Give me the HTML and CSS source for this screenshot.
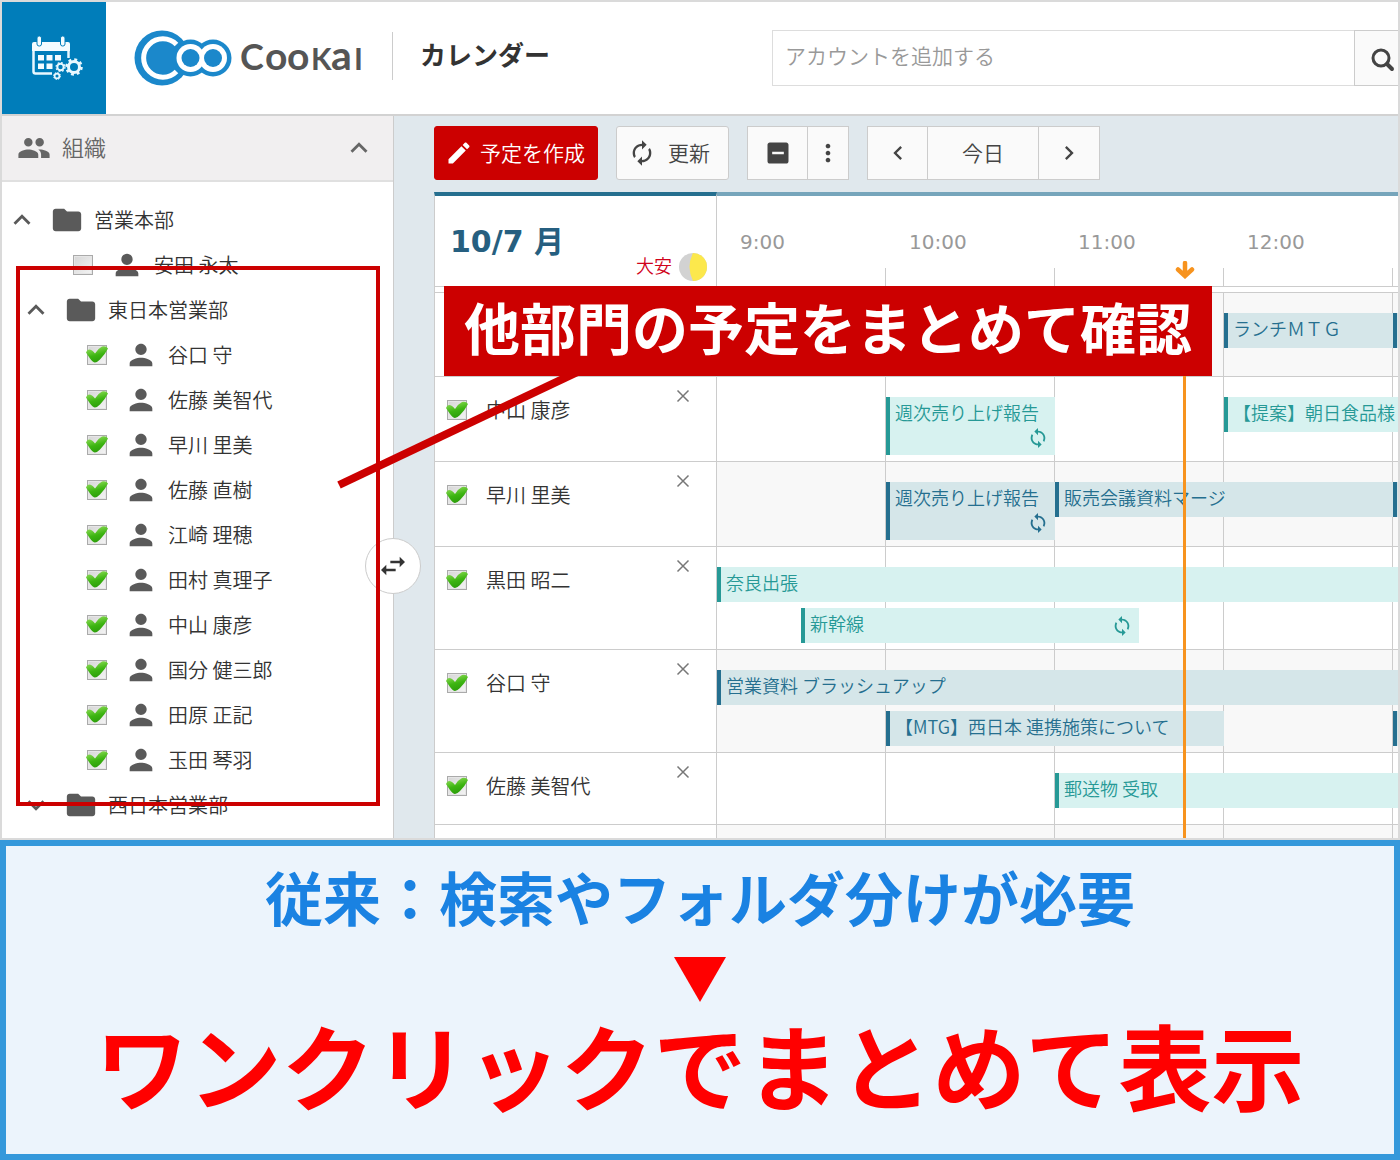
FILE: index.html
```html
<!DOCTYPE html>
<html lang="ja">
<head>
<meta charset="utf-8">
<meta name="viewport" content="width=device-width, initial-scale=1">
<title>CooKai カレンダー</title>
<link rel="stylesheet" href="styles.css">
</head>
<body>
<svg class="defs" aria-hidden="true">
  <symbol id="i-up" viewBox="0 0 24 24"><path d="M12 8l-6 6 1.41 1.41L12 10.83l4.59 4.58L18 14z"/></symbol>
  <symbol id="i-down" viewBox="0 0 24 24"><path d="M16.59 8.59L12 13.17 7.41 8.59 6 10l6 6 6-6z"/></symbol>
  <symbol id="i-left" viewBox="0 0 24 24"><path d="M15.41 7.41L14 6l-6 6 6 6 1.41-1.41L10.83 12z"/></symbol>
  <symbol id="i-right" viewBox="0 0 24 24"><path d="M10 6L8.59 7.41 13.17 12l-4.58 4.59L10 18l6-6z"/></symbol>
  <symbol id="i-folder" viewBox="0 0 24 24"><path d="M10 4H4c-1.1 0-1.99.9-1.99 2L2 18c0 1.1.9 2 2 2h16c1.1 0 2-.9 2-2V8c0-1.1-.9-2-2-2h-8l-2-2z"/></symbol>
  <symbol id="i-person" viewBox="0 0 24 24"><path d="M12 12c2.21 0 4-1.79 4-4s-1.79-4-4-4-4 1.790-4 4 1.790 4 4 4zm0 2c-2.670 0-8 1.340-8 4v2h16v-2c0-2.660-5.330-4-8-4z"/></symbol>
  <symbol id="i-people" viewBox="0 0 24 24"><path d="M16 11c1.660 0 2.990-1.340 2.990-3S17.660 5 16 5s-3 1.340-3 3 1.340 3 3 3zm-8 0c1.660 0 2.990-1.340 2.990-3S9.660 5 8 5 5 6.340 5 8s1.340 3 3 3zm0 2c-2.330 0-7 1.170-7 3.500V19h14v-2.500c0-2.330-4.670-3.500-7-3.500zm8 0c-.290 0-.620.020-.970.050 1.160.840 1.970 1.970 1.970 3.450V19h6v-2.500c0-2.330-4.670-3.500-7-3.500z"/></symbol>
  <symbol id="i-edit" viewBox="0 0 24 24"><path d="M3 17.250V21h3.750L17.810 9.940l-3.750-3.750L3 17.250zM20.710 7.040c.390-.390.390-1.020 0-1.410l-2.340-2.340c-.390-.390-1.020-.390-1.410 0l-1.830 1.830 3.750 3.750 1.830-1.830z"/></symbol>
  <symbol id="i-renew" viewBox="0 0 24 24"><path d="M12 6v3l4-4-4-4v3c-4.420 0-8 3.580-8 8 0 1.570.460 3.030 1.240 4.260L6.700 14.800c-.450-.830-.700-1.790-.700-2.800 0-3.310 2.690-6 6-6zm6.760 1.740L17.300 9.200c.440.840.700 1.790.700 2.800 0 3.310-2.690 6-6 6v-3l-4 4 4 4v-3c4.420 0 8-3.580 8-8 0-1.570-.460-3.030-1.240-4.260z"/></symbol>
  <symbol id="i-sync" viewBox="0 0 24 24"><path d="M12 4V1L8 5l4 4V6c3.310 0 6 2.690 6 6 0 1.010-.250 1.970-.700 2.800l1.460 1.460C19.540 15.030 20 13.570 20 12c0-4.420-3.580-8-8-8zm0 14c-3.310 0-6-2.690-6-6 0-1.010.250-1.970.700-2.800L5.240 7.740C4.460 8.970 4 10.430 4 12c0 4.420 3.580 8 8 8v3l4-4-4-4v3z"/></symbol>
  <symbol id="i-minus" viewBox="0 0 24 24"><path d="M19 3H5c-1.100 0-2 .9-2 2v14c0 1.100.9 2 2 2h14c1.100 0 2-.9 2-2V5c0-1.100-.9-2-2-2zm-2 10H7v-2h10v2z"/></symbol>
  <symbol id="i-more" viewBox="0 0 24 24"><path d="M12 8c1.100 0 2-.9 2-2s-.9-2-2-2-2 .9-2 2 .9 2 2 2zm0 2c-1.100 0-2 .9-2 2s.9 2 2 2 2-.9 2-2-.9-2-2-2zm0 6c-1.100 0-2 .9-2 2s.9 2 2 2 2-.9 2-2-.9-2-2-2z"/></symbol>
  <symbol id="i-swap" viewBox="0 0 24 24"><path d="M6.990 11L3 15l3.990 4v-3H14v-2H6.990v-3zM21 9l-3.990-4v3H10v2h7.010v3L21 9z"/></symbol>
  <symbol id="i-close" viewBox="0 0 18 18"><path d="M3.500 3.500l11 11M14.500 3.500l-11 11" fill="none" stroke="currentColor" stroke-width="1.500"/></symbol>
  <symbol id="i-search" viewBox="0 0 30 30"><circle cx="12" cy="13" r="8" fill="none" stroke="currentColor" stroke-width="3"/><path d="M18 19l5 5" stroke="currentColor" stroke-width="4" stroke-linecap="round"/></symbol>
</svg>

<section class="app">
  <header class="topbar">
    <a class="app-icon" href="#" aria-label="カレンダー">
      <svg width="54" height="46" viewBox="0 0 54 46">
        <g fill="none" stroke="#e9f8ff" stroke-width="2.500">
          <path d="M3.500 12v24.500q0 2 2 2H22M38.500 13v10"/>
        </g>
        <g fill="#f4fcff">
          <path d="M4 7h34q2 0 2 2v7H2V9q0-2 2-2z"/>
          <rect x="8" y="20" width="6" height="5.500"/><rect x="16.500" y="20" width="6" height="5.500"/><rect x="25" y="20" width="6" height="5.500"/>
          <rect x="8" y="28.500" width="6" height="5.500"/><rect x="16.500" y="28.500" width="6" height="5.500"/>
        </g>
        <g fill="#f4fcff" stroke="#007dba" stroke-width="1"><rect x="7" y="1" width="4.500" height="10" rx="2"/><rect x="30.500" y="1" width="4.500" height="10" rx="2"/></g>
        <g fill="none" stroke="#e9f8ff">
          <circle cx="44" cy="32" r="5.500" stroke-width="3"/>
          <circle cx="44" cy="32" r="7.500" stroke-width="2.500" stroke-dasharray="2.900 2.990"/>
          <circle cx="30.500" cy="32" r="3.200" stroke-width="2"/>
          <circle cx="30.500" cy="32" r="4.500" stroke-width="1.200" stroke-dasharray="1.800 1.734"/>
          <circle cx="27" cy="41" r="2.400" stroke-width="1.700"/>
          <circle cx="27" cy="41" r="3.500" stroke-width="1" stroke-dasharray="1.400 1.349"/>
        </g>
      </svg>
    </a>
    <a class="logo" href="#" aria-label="CooKai">
      <svg width="232" height="58" viewBox="133 29 232 58">
        <g fill="#1b88cb"><circle cx="162" cy="58" r="27.500"/><circle cx="190.500" cy="58" r="18.500"/><circle cx="213" cy="58" r="18.500"/></g>
        <g fill="none" stroke="#fff" stroke-width="5">
          <path d="M176.500 44.500A19.200 19.200 0 1 0 176.500 71.500"/>
        </g>
        <circle cx="190.500" cy="58" r="14" fill="#fff"/><circle cx="213" cy="58" r="14" fill="#fff"/>
        <circle cx="190.500" cy="58" r="9" fill="#1b88cb"/><circle cx="213" cy="58" r="9" fill="#1b88cb"/>
        <text class="wordmark" y="70"><tspan x="240" font-size="36">C</tspan><tspan x="265" font-size="39">o</tspan><tspan x="287" font-size="39">o</tspan><tspan x="311" font-size="30">K</tspan><tspan x="331" font-size="41">a</tspan><tspan x="354" font-size="30">I</tspan></text>
      </svg>
    </a>
    <h1 class="page-title">カレンダー</h1>
    <form class="search">
      <input type="text" placeholder="アカウントを追加する" aria-label="アカウントを追加する">
      <button type="button" aria-label="検索"><svg width="30" height="30"><use href="#i-search"/></svg></button>
    </form>
  </header>

  <div class="workspace">
    <aside class="sidebar">
      <div class="side-head">
        <svg width="34" height="34"><use href="#i-people"/></svg>
        <h2>組織</h2>
        <button type="button" aria-label="閉じる"><svg width="34" height="34"><use href="#i-up"/></svg></button>
      </div>
      <ul class="tree">
        <li class="folder"><button type="button" aria-label="閉じる"><svg><use href="#i-up"/></svg></button><svg><use href="#i-folder"/></svg><span>営業本部</span></li>
        <li class="person"><label><input type="checkbox"><svg><use href="#i-person"/></svg><span>安田 永太</span></label></li>
        <li>
          <ul class="branch">
            <li class="folder"><button type="button" aria-label="閉じる"><svg><use href="#i-up"/></svg></button><svg><use href="#i-folder"/></svg><span>東日本営業部</span></li>
            <li class="person"><label><input type="checkbox" checked><svg><use href="#i-person"/></svg><span>谷口 守</span></label></li>
            <li class="person"><label><input type="checkbox" checked><svg><use href="#i-person"/></svg><span>佐藤 美智代</span></label></li>
            <li class="person"><label><input type="checkbox" checked><svg><use href="#i-person"/></svg><span>早川 里美</span></label></li>
            <li class="person"><label><input type="checkbox" checked><svg><use href="#i-person"/></svg><span>佐藤 直樹</span></label></li>
            <li class="person"><label><input type="checkbox" checked><svg><use href="#i-person"/></svg><span>江崎 理穂</span></label></li>
            <li class="person"><label><input type="checkbox" checked><svg><use href="#i-person"/></svg><span>田村 真理子</span></label></li>
            <li class="person"><label><input type="checkbox" checked><svg><use href="#i-person"/></svg><span>中山 康彦</span></label></li>
            <li class="person"><label><input type="checkbox" checked><svg><use href="#i-person"/></svg><span>国分 健三郎</span></label></li>
            <li class="person"><label><input type="checkbox" checked><svg><use href="#i-person"/></svg><span>田原 正記</span></label></li>
            <li class="person"><label><input type="checkbox" checked><svg><use href="#i-person"/></svg><span>玉田 琴羽</span></label></li>
            <li class="folder"><button type="button" aria-label="開く"><svg><use href="#i-down"/></svg></button><svg><use href="#i-folder"/></svg><span>西日本営業部</span></li>
          </ul>
        </li>
      </ul>
      <button type="button" class="side-toggle" aria-label="サイドバーの幅"><svg width="32" height="32"><use href="#i-swap"/></svg></button>
    </aside>

    <main class="calendar">
      <div class="toolbar">
        <button type="button" class="btn primary"><svg width="28" height="28"><use href="#i-edit"/></svg><span>予定を作成</span></button>
        <button type="button" class="btn refresh"><svg width="28" height="28"><use href="#i-renew"/></svg><span>更新</span></button>
        <div class="btn-group">
          <button type="button" class="btn step" aria-label="折りたたむ"><svg width="28" height="28"><use href="#i-minus"/></svg></button>
          <button type="button" class="btn more" aria-label="その他"><svg width="28" height="28"><use href="#i-more"/></svg></button>
        </div>
        <div class="btn-group">
          <button type="button" class="btn step" aria-label="前の日"><svg width="28" height="28"><use href="#i-left"/></svg></button>
          <button type="button" class="btn today"><span>今日</span></button>
          <button type="button" class="btn step" aria-label="次の日"><svg width="28" height="28"><use href="#i-right"/></svg></button>
        </div>
      </div>

      <div class="schedule">
        <table>
          <colgroup><col class="c-name"><col span="5" class="c-hour"></colgroup>
          <thead>
            <tr>
              <th class="date-cell"><div class="date-head"><span class="date">10/7 月</span><span class="rokuyo">大安</span>
                <svg width="28" height="28" viewBox="0 0 28 28" aria-hidden="true"><circle cx="14" cy="14" r="14" fill="#d2d2d2"/><path d="M14 0a14 14 0 0 1 0 28Q7 14 14 0z" fill="#fce84c"/></svg></div></th>
              <th class="hour">9:00</th><th class="hour">10:00</th><th class="hour">11:00</th><th class="hour">12:00</th><th class="hour"></th>
            </tr>
            <tr class="head-gap"><td colspan="6"></td></tr>
          </thead>
          <tbody>
            <tr class="tall">
              <th><div class="member"></div></th>
              <td colspan="5"><div class="lane"><div class="ev blue h12 w1">ランチＭＴＧ</div><div class="ev blue h13 w1"></div></div></td>
            </tr>
            <tr>
              <th><div class="member"><label><input type="checkbox" checked><span>中山 康彦</span></label><button type="button" aria-label="外す"><svg width="18" height="18"><use href="#i-close"/></svg></button></div></th>
              <td colspan="5"><div class="lane"><div class="ev teal double h10 w1">週次売り上げ報告<svg width="22" height="22"><use href="#i-sync"/></svg></div><div class="ev teal h12 w2">【提案】朝日食品様</div></div></td>
            </tr>
            <tr>
              <th><div class="member"><label><input type="checkbox" checked><span>早川 里美</span></label><button type="button" aria-label="外す"><svg width="18" height="18"><use href="#i-close"/></svg></button></div></th>
              <td colspan="5"><div class="lane"><div class="ev blue double h10 w1">週次売り上げ報告<svg width="22" height="22"><use href="#i-sync"/></svg></div><div class="ev blue h11 w2">販売会議資料マージ</div><div class="ev blue h13 w1"></div></div></td>
            </tr>
            <tr>
              <th><div class="member"><label><input type="checkbox" checked><span>黒田 昭二</span></label><button type="button" aria-label="外す"><svg width="18" height="18"><use href="#i-close"/></svg></button></div></th>
              <td colspan="5"><div class="lane"><div class="ev teal h9 w5">奈良出張</div><div class="ev teal second h9half w2">新幹線<svg width="22" height="22"><use href="#i-sync"/></svg></div></div></td>
            </tr>
            <tr>
              <th><div class="member"><label><input type="checkbox" checked><span>谷口 守</span></label><button type="button" aria-label="外す"><svg width="18" height="18"><use href="#i-close"/></svg></button></div></th>
              <td colspan="5"><div class="lane"><div class="ev blue h9 w5">営業資料 ブラッシュアップ</div><div class="ev blue second h10 w2">【MTG】西日本 連携施策について</div><div class="ev blue second h13 w1"></div></div></td>
            </tr>
            <tr>
              <th><div class="member"><label><input type="checkbox" checked><span>佐藤 美智代</span></label><button type="button" aria-label="外す"><svg width="18" height="18"><use href="#i-close"/></svg></button></div></th>
              <td colspan="5"><div class="lane"><div class="ev teal h11 w3">郵送物 受取</div></div></td>
            </tr>
            <tr>
              <th><div class="member last"><button type="button" aria-label="外す"><svg width="18" height="18"><use href="#i-close"/></svg></button></div></th>
              <td colspan="5"><div class="lane"></div></td>
            </tr>
          </tbody>
        </table>
        <svg class="now-mark" width="20" height="18" viewBox="0 0 20 18" aria-hidden="true"><path d="M10 2v12M3 8.500l7 6.500 7-6.500" fill="none" stroke="#f7931e" stroke-width="4.500" stroke-linecap="round"/></svg>
        <div class="now-line"></div>
      </div>
    </main>
  </div>

  <div class="frame"></div>
  <svg class="pointer" width="260" height="130" viewBox="0 0 260 130" aria-hidden="true"><path d="M9 125L260 6" stroke="#c00" stroke-width="8"/></svg>
  <p class="callout">他部門の予定をまとめて確認</p>
</section>

<section class="promo">
  <p class="before">従来：検索やフォルダ分けが必要</p>
  <div class="arrow"></div>
  <p class="after">ワンクリックでまとめて表示</p>
</section>
</body>
</html>
```
FILE: styles.css
```css
* { box-sizing: border-box; }

body {
  margin: 0;
  height: 100vh;
  display: flex;
  flex-direction: column;
  font-family: "Noto Sans CJK JP", sans-serif;
  font-weight: 350;
  font-size: 20px;
  color: #333;
}

h1, h2, p, ul { margin: 0; padding: 0; }
ul { list-style: none; }
svg { display: block; flex: none; fill: currentColor; }
.defs { position: absolute; width: 0; height: 0; }

button {
  font: inherit;
  color: inherit;
  background: none;
  border: 0;
  padding: 0;
  cursor: pointer;
}

input[type="checkbox"] {
  appearance: none;
  flex: none;
  position: relative;
  width: 20px;
  height: 20px;
  margin: 0;
  border: 1px solid #aaa;
  background: linear-gradient(135deg, #d6d6d6, #f4f4f4);
  box-shadow: inset 0 0 0 1px #e6e6e6;
}

input[type="checkbox"]:checked::before {
  content: "";
  position: absolute;
  left: -2px;
  top: -1px;
  width: 22px;
  height: 20px;
  background: linear-gradient(165deg, #8edb58 15%, #3db511 50%, #1f8d05);
  clip-path: path("M0 8Q1 5 3 5Q6 5 9 9Q12 4 16 2Q20 1 22 4Q19 10 14 15Q11 18 9 18Q7 18 4 14Z");
}

/* application window */
.app {
  flex: 1;
  min-height: 0;
  position: relative;
  display: flex;
  flex-direction: column;
  overflow: hidden;
  border: 2px solid #dadada;
  background: #fff;
}

.topbar {
  flex: none;
  display: flex;
  align-items: center;
  border-bottom: 2px solid #d2d2d2;
}

.app-icon {
  display: flex;
  align-items: center;
  justify-content: center;
  width: 104px;
  height: 112px;
  padding-left: 6px;
  background: #007dba;
}

.logo { margin-left: 27px; }
.wordmark { font-family: Lato, sans-serif; font-weight: 700; fill: #555; }

.page-title {
  display: flex;
  align-items: center;
  height: 48px;
  margin: 0 0 4px 27px;
  padding: 0 0 6px 27px;
  border-left: 1px solid #ccc;
  font-size: 26px;
  font-weight: 700;
  white-space: nowrap;
}

.search {
  flex: 0 1 626px;
  display: flex;
  height: 56px;
  margin-left: auto;
}

.search input {
  flex: 1;
  min-width: 0;
  padding: 0 12px 6px;
  border: 1px solid #ddd;
  border-right: 0;
  font: inherit;
  font-size: 21px;
}

.search input::placeholder { color: #999; opacity: 1; }

.search button {
  width: 44px;
  padding: 4px 0 0 14px;
  border: 1px solid #ccc;
  border-right: 0;
  background: #fafafa;
  color: #444;
}

.workspace { flex: 1; min-height: 0; display: flex; }

/* organisation tree */
.sidebar {
  flex: 0 0 392px;
  position: relative;
  border-right: 1px solid #ccc;
}

.side-head {
  display: flex;
  align-items: center;
  height: 66px;
  padding: 0 17px 0 15px;
  border-bottom: 2px solid #e0e0e0;
  background: #f1eff0;
  color: #666;
}

.side-head h2 { flex: 1; margin-left: 11px; padding-bottom: 4px; font-size: 22px; font-weight: 350; }

.tree { padding-top: 15px; }
.branch { padding-left: 14px; }
.tree svg { width: 34px; height: 34px; color: #5a5a5a; }
.folder, .person label { display: flex; align-items: center; height: 45px; }
.folder { padding-left: 3px; }
.folder button { margin-right: 11px; }
.folder span { margin-left: 10px; }
.person label { padding-left: 71px; }
.person label svg { margin: 0 10px 0 17px; }

.side-toggle {
  position: absolute;
  top: 422px;
  right: -28px;
  z-index: 1;
  display: grid;
  place-items: center;
  width: 56px;
  height: 56px;
  border: 1px solid #ccc;
  border-radius: 50%;
  background: #fff;
}

/* calendar */
.calendar {
  flex: 1;
  min-width: 0;
  display: flex;
  flex-direction: column;
  padding: 10px 0 0 40px;
  overflow: hidden;
  background: #e0e8ed;
}

.toolbar { display: flex; gap: 18px; padding-bottom: 12px; }
.btn-group { display: flex; }

.btn {
  display: flex;
  align-items: center;
  justify-content: center;
  height: 54px;
  border: 1px solid #ccc;
  border-radius: 3px;
  background: #fafafa;
  color: #444;
  font-size: 21px;
  white-space: nowrap;
}

.btn span { padding-bottom: 2px; }
.btn-group .btn { border-radius: 0; }
.btn-group .btn + .btn { border-left: 0; }
.primary { gap: 7px; padding: 0 12px 0 10px; border-color: #c00; background: #c00; color: #fff; }
.refresh { gap: 12px; width: 113px; padding-right: 7px; }
.step { width: 61px; }
.more { width: 41px; }
.today { width: 111px; }

.schedule { flex: 1; min-height: 0; position: relative; }

table {
  width: 1128px;
  table-layout: fixed;
  border-collapse: separate;
  border-spacing: 0;
  background: #fff;
}

.c-name { width: 283px; }
.c-hour { width: 169px; }
th, td { padding: 0; font-weight: 350; text-align: left; vertical-align: top; }

thead th { height: 95px; border-bottom: 1px solid #ccc; }

.date-cell { border: 1px solid #ccc; border-top: 4px solid #256f8f; }
.date-head { display: flex; align-items: flex-end; height: 90px; padding: 0 9px 5px 15px; }

.date {
  flex: 1;
  align-self: flex-start;
  padding-top: 27px;
  font: 700 30px/38px "DejaVu Sans", "Noto Sans CJK JP", sans-serif;
  color: #265f80;
}

.rokuyo { margin-right: 7px; padding-bottom: 2px; font-size: 18px; line-height: 28px; color: #d0021b; }

.hour {
  padding: 27px 0 0 23px;
  border-top: 4px solid #76a5bb;
  background: linear-gradient(#ccc, #ccc) right bottom / 1px 18px no-repeat;
  font: 20px/38px "DejaVu Sans", sans-serif;
  color: #999;
}

.head-gap td { height: 6px; border: 1px solid #ccc; border-width: 0 0 1px 1px; }

tbody th { border: 1px solid #ccc; border-top: 0; }
tbody td { height: 72px; border-bottom: 1px solid #ccc; background: repeating-linear-gradient(90deg, transparent 0 168px, #ccc 168px 169px); }
tbody tr:nth-child(odd) td { background-color: #f8f8f8; }
.tall td { height: 84px; }

.member { display: flex; align-items: flex-start; justify-content: space-between; padding: 10px 24px 0 12px; }
.member label { display: flex; align-items: center; gap: 19px; padding-top: 9px; line-height: 28px; }
.member button { color: #777; }
.member.last { justify-content: flex-end; }

/* half-hour columns */
.lane {
  display: grid;
  grid-template-columns: repeat(5, 84px 85px);
  grid-auto-rows: min-content;
  row-gap: 6px;
  padding: 20px 0 6px;
}

.ev {
  position: relative;
  grid-row: 1;
  min-width: 0;
  height: 35px;
  padding-left: 5px;
  border-left: 4px solid;
  font-size: 18px;
  line-height: 30px;
  white-space: nowrap;
}

.ev svg { position: absolute; right: 6px; bottom: 6px; }
.double { height: 58px; }
.second { grid-row: 2; }
.teal { border-color: #269996; background: #d7f2f0; color: #269996; }
.blue { border-color: #256f8f; background: #d5e6e9; color: #256f8f; }
.h9 { grid-column-start: 1; }
.h9half { grid-column-start: 2; }
.h10 { grid-column-start: 3; }
.h11 { grid-column-start: 5; }
.h12 { grid-column-start: 7; }
.h13 { grid-column-start: 9; }
.w1 { grid-column-end: span 2; }
.w2 { grid-column-end: span 4; }
.w3 { grid-column-end: span 6; }
.w5 { grid-column-end: span 10; }

.now-mark { position: absolute; left: 741px; top: 69px; }
.now-line { position: absolute; left: 749px; top: 101px; bottom: 0; width: 3px; background: #f7931e; }

/* annotations over the window */
.frame { position: absolute; z-index: 2; left: 14px; top: 264px; width: 364px; height: 540px; border: 4px solid #c00; }
.pointer { position: absolute; z-index: 2; left: 328px; top: 358px; }

.callout {
  position: absolute;
  z-index: 3;
  left: 442px;
  top: 284px;
  padding: 0 20px 10px;
  background: #c00;
  color: #fff;
  font-size: 56px;
  font-weight: 700;
  line-height: 80px;
  white-space: nowrap;
}

/* message panel */
.promo {
  flex: none;
  display: flex;
  flex-direction: column;
  align-items: center;
  padding: 10px 0 30px;
  border: 6px solid #3498db;
  background: #ecf4fc;
  font-weight: 700;
  text-align: center;
}

.before { color: #1a82e2; font-size: 58px; line-height: 80px; }
.arrow { width: 52px; height: 45px; margin: 21px 0 2px; background: #f00; clip-path: polygon(0 0, 100% 0, 50% 100%); }
.after { color: #f00; font-size: 93px; line-height: 120px; }
```
